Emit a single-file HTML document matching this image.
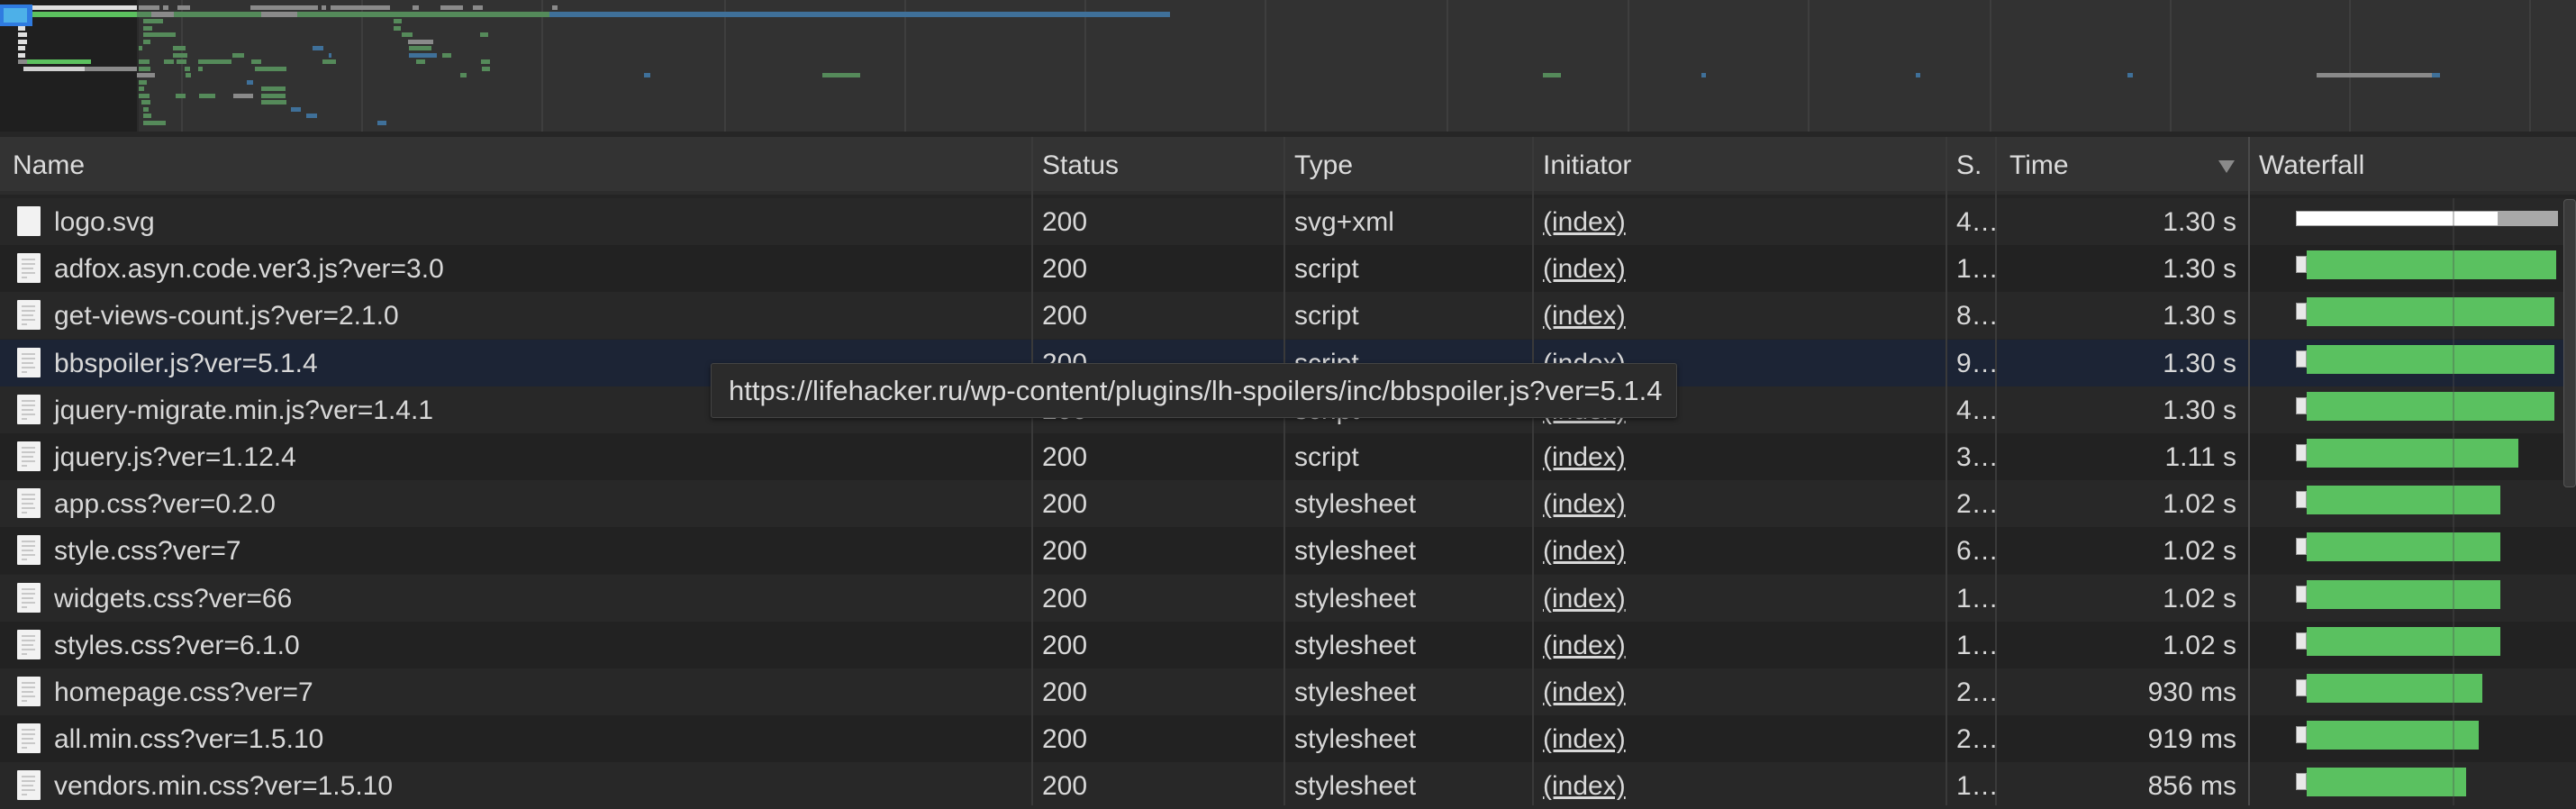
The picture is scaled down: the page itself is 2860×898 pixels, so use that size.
<!DOCTYPE html>
<html><head><meta charset="utf-8"><style>
*{margin:0;padding:0;box-sizing:border-box}
body{width:2860px;height:894px;overflow:hidden;background:#242424;font-family:"Liberation Sans",Arial,sans-serif;color:#d8d8d8;position:relative}
.a{position:absolute}
.ov{left:0;top:0;width:2860px;height:146px;background:#323232}
.gl{position:absolute;top:0;width:2px;height:146px;background:#3e3e3e}
.b{position:absolute;height:5px;background:#558a5a}
.bl{background:#3f7099}.gr{background:#8a8a8a}.wh{background:#e0e0e0}
.hdr{left:0;top:152px;width:2860px;height:64px;background:#333;border-bottom:4px solid #2c2c2c}
.ht{position:absolute;top:167px;font-size:30px;color:#dcdcdc}
.row{position:absolute;left:0;width:2860px;height:52px;font-size:30px}
.row span{position:absolute;top:10px;white-space:nowrap}
.vd{position:absolute;top:152px;width:2px;height:742px;background:#3a3a3a}
.ic{position:absolute;left:19px;top:9px;width:26px;height:33px;background:#f2f2f2;border-radius:1px}
.ic i{position:absolute;left:5px;height:2px;background:#c8c8c8}
</style></head><body>
<div class="a ov">
<div class="a" style="left:0;top:0;width:152px;height:146px;background:#1f1f1f"></div>
<div class="gl" style="left:152px;background:#2a2a2a"></div>
<div class="gl" style="left:201px"></div><div class="gl" style="left:401px"></div><div class="gl" style="left:601px"></div><div class="gl" style="left:804px"></div><div class="gl" style="left:1004px"></div><div class="gl" style="left:1204px"></div><div class="gl" style="left:1404px"></div><div class="gl" style="left:1606px"></div><div class="gl" style="left:1807px"></div><div class="gl" style="left:2007px"></div><div class="gl" style="left:2209px"></div><div class="gl" style="left:2409px"></div><div class="gl" style="left:2608px"></div><div class="gl" style="left:2808px"></div>
<div class="b wh" style="left:36px;top:6px;width:116px"></div>
<div class="b gr" style="left:154px;top:6px;width:23px"></div><div class="b gr" style="left:181px;top:6px;width:6px"></div><div class="b gr" style="left:197px;top:6px;width:14px"></div><div class="b gr" style="left:278px;top:6px;width:75px"></div><div class="b gr" style="left:357px;top:6px;width:5px"></div><div class="b gr" style="left:367px;top:6px;width:66px"></div><div class="b gr" style="left:458px;top:6px;width:7px"></div><div class="b gr" style="left:489px;top:6px;width:25px"></div><div class="b gr" style="left:525px;top:6px;width:11px"></div><div class="b gr" style="left:613px;top:6px;width:6px"></div>
<div class="b" style="left:36px;top:13px;width:116px;height:6px;background:#5cc15f"></div>
<div class="b" style="left:152px;top:13px;width:458px;height:6px;background:#548a5a"></div>
<div class="b gr" style="left:168px;top:13px;width:25px;height:6px"></div><div class="b gr" style="left:290px;top:13px;width:40px;height:6px"></div>
<div class="b bl" style="left:610px;top:13px;width:689px;height:6px"></div>
<div class="a" style="left:0;top:5px;width:36px;height:24px;background:#2f7be0"></div>
<div class="a" style="left:4px;top:9px;width:26px;height:16px;background:#4db0e8"></div>
<div class="b" style="left:159px;top:21px;width:22px"></div><div class="b" style="left:437px;top:21px;width:9px"></div>
<div class="b" style="left:159px;top:29px;width:10px"></div><div class="b" style="left:437px;top:29px;width:8px"></div>
<div class="b" style="left:159px;top:36px;width:36px"></div><div class="b" style="left:446px;top:36px;width:12px"></div><div class="b" style="left:533px;top:36px;width:9px"></div>
<div class="b" style="left:159px;top:44px;width:8px"></div><div class="b gr" style="left:453px;top:44px;width:28px"></div>
<div class="b" style="left:154px;top:51px;width:4px"></div><div class="b" style="left:192px;top:51px;width:14px"></div><div class="b bl" style="left:347px;top:51px;width:12px"></div><div class="b" style="left:454px;top:51px;width:25px"></div>
<div class="b" style="left:192px;top:59px;width:16px"></div><div class="b" style="left:258px;top:59px;width:13px"></div><div class="b bl" style="left:365px;top:59px;width:3px"></div><div class="b bl" style="left:454px;top:59px;width:31px"></div><div class="b" style="left:491px;top:59px;width:10px"></div>
<div class="b gr" style="left:20px;top:66px;width:10px"></div><div class="b" style="left:30px;top:66px;width:71px;background:#5cc15f"></div>
<div class="b" style="left:154px;top:66px;width:12px"></div><div class="b" style="left:182px;top:66px;width:11px"></div><div class="b" style="left:196px;top:66px;width:11px"></div><div class="b" style="left:220px;top:66px;width:37px"></div><div class="b" style="left:279px;top:66px;width:11px"></div><div class="b" style="left:358px;top:66px;width:15px"></div><div class="b" style="left:462px;top:66px;width:10px"></div><div class="b" style="left:534px;top:66px;width:10px"></div>
<div class="b" style="left:26px;top:74px;width:68px;background:#d0d0d0"></div><div class="b gr" style="left:94px;top:74px;width:58px"></div>
<div class="b" style="left:154px;top:74px;width:13px"></div><div class="b" style="left:205px;top:74px;width:6px"></div><div class="b" style="left:220px;top:74px;width:5px"></div><div class="b" style="left:283px;top:74px;width:35px"></div><div class="b" style="left:535px;top:74px;width:9px"></div>
<div class="b gr" style="left:152px;top:81px;width:20px"></div><div class="b" style="left:206px;top:81px;width:6px"></div><div class="b" style="left:511px;top:81px;width:7px"></div><div class="b bl" style="left:715px;top:81px;width:7px"></div><div class="b" style="left:913px;top:81px;width:42px"></div>
<div class="b" style="left:1713px;top:81px;width:20px"></div><div class="b bl" style="left:1889px;top:81px;width:5px"></div><div class="b bl" style="left:2127px;top:81px;width:5px"></div><div class="b bl" style="left:2362px;top:81px;width:6px"></div><div class="b gr" style="left:2572px;top:81px;width:128px"></div><div class="b bl" style="left:2700px;top:81px;width:9px"></div>
<div class="b" style="left:154px;top:89px;width:9px"></div><div class="b bl" style="left:274px;top:89px;width:7px"></div>
<div class="b" style="left:154px;top:96px;width:6px"></div><div class="b" style="left:290px;top:96px;width:27px"></div>
<div class="b" style="left:154px;top:104px;width:12px"></div><div class="b" style="left:195px;top:104px;width:11px"></div><div class="b" style="left:221px;top:104px;width:18px"></div><div class="b gr" style="left:259px;top:104px;width:22px"></div><div class="b" style="left:290px;top:104px;width:27px"></div>
<div class="b" style="left:157px;top:111px;width:10px"></div><div class="b" style="left:290px;top:111px;width:28px"></div>
<div class="b" style="left:159px;top:119px;width:6px"></div><div class="b bl" style="left:323px;top:119px;width:11px"></div>
<div class="b" style="left:159px;top:126px;width:9px"></div><div class="b bl" style="left:340px;top:126px;width:12px"></div>
<div class="b" style="left:159px;top:134px;width:25px"></div><div class="b bl" style="left:419px;top:134px;width:10px"></div>
<div class="b wh" style="left:20px;top:29px;width:8px"></div><div class="b wh" style="left:20px;top:36px;width:10px"></div><div class="b wh" style="left:20px;top:44px;width:10px"></div><div class="b wh" style="left:20px;top:51px;width:8px"></div><div class="b wh" style="left:20px;top:59px;width:8px"></div>
</div>
<div class="a" style="left:0;top:146px;width:2860px;height:6px;background:#262626"></div>
<div class="a hdr"></div>
<div class="ht" style="left:14px">Name</div>
<div class="ht" style="left:1157px">Status</div>
<div class="ht" style="left:1437px">Type</div>
<div class="ht" style="left:1713px">Initiator</div>
<div class="ht" style="left:2172px">S.</div>
<div class="ht" style="left:2231px">Time</div>
<div class="a" style="left:2463px;top:178px;width:0;height:0;border-left:9px solid transparent;border-right:9px solid transparent;border-top:14px solid #8a8a8a"></div>
<div class="ht" style="left:2508px">Waterfall</div>

<div id="rows"></div>
<div class="vd" style="left:1145px"></div>
<div class="vd" style="left:1425px"></div>
<div class="vd" style="left:1701px"></div>
<div class="vd" style="left:2160px"></div>
<div class="vd" style="left:2215px"></div>
<div class="vd" style="left:2496px;background:#4a4a4a"></div>
<div class="a" style="left:2723px;top:220px;width:2px;height:674px;background:rgba(80,80,80,.35)"></div>
<div class="a" style="left:2846px;top:221px;width:14px;height:320px;background:#3a3a3a;border:1px solid #555;border-radius:4px"></div>

<div class="a" style="left:789px;top:403px;width:1073px;height:61px;background:#2b2b2b;border:1px solid #444;border-radius:3px;box-shadow:0 2px 6px rgba(0,0,0,.5);font-size:31px;color:#dcdcdc;padding:12px 0 0 19px;white-space:nowrap;z-index:5">https://lifehacker.ru/wp-content/plugins/lh-spoilers/inc/bbspoiler.js?ver=5.1.4</div>

<script>
var d=[["logo.svg","svg+xml","4…","1.30 s",0],
["adfox.asyn.code.ver3.js?ver=3.0","script","1…","1.30 s",2838],
["get-views-count.js?ver=2.1.0","script","8…","1.30 s",2836],
["bbspoiler.js?ver=5.1.4","script","9…","1.30 s",2836],
["jquery-migrate.min.js?ver=1.4.1","script","4…","1.30 s",2836],
["jquery.js?ver=1.12.4","script","3…","1.11 s",2796],
["app.css?ver=0.2.0","stylesheet","2…","1.02 s",2776],
["style.css?ver=7","stylesheet","6…","1.02 s",2776],
["widgets.css?ver=66","stylesheet","1…","1.02 s",2776],
["styles.css?ver=6.1.0","stylesheet","1…","1.02 s",2776],
["homepage.css?ver=7","stylesheet","2…","930 ms",2756],
["all.min.css?ver=1.5.10","stylesheet","2…","919 ms",2752],
["vendors.min.css?ver=1.5.10","stylesheet","1…","856 ms",2738]];
var h="";
d.forEach(function(r,i){
var top=220+i*52.2;
var bg=i==3?"#1c2435":(i%2==0?"#282828":"#222222");
var lines=r[4]?'<i style="top:6px;width:15px"></i><i style="top:11px;width:15px"></i><i style="top:16px;width:13px"></i><i style="top:21px;width:15px"></i><i style="top:26px;width:6px"></i>':'';
var wf=r[4]?'<div class="a" style="left:2549px;top:12px;width:12px;height:19px;background:#e8e8e8;border:1px solid #999"></div><div class="a" style="left:2561px;top:6px;width:'+(r[4]-2561)+'px;height:32px;background:#5ac160"></div>'
:'<div class="a" style="left:2549px;top:14px;width:225px;height:17px;background:#fff;border:1px solid #aaa"></div><div class="a" style="left:2774px;top:14px;width:66px;height:17px;background:#a8a8a8"></div>';
h+='<div class="row" style="top:'+top+'px;background:'+bg+'"><div class="ic">'+lines+'</div><span style="left:60px">'+r[0]+'</span><span style="left:1157px">200</span><span style="left:1437px">'+r[1]+'</span><span style="left:1713px;text-decoration:underline">(index)</span><span style="left:2172px">'+r[2]+'</span><span style="right:377px">'+r[3]+'</span>'+wf+'</div>';
});
document.getElementById("rows").innerHTML=h;
</script>
</body></html>
